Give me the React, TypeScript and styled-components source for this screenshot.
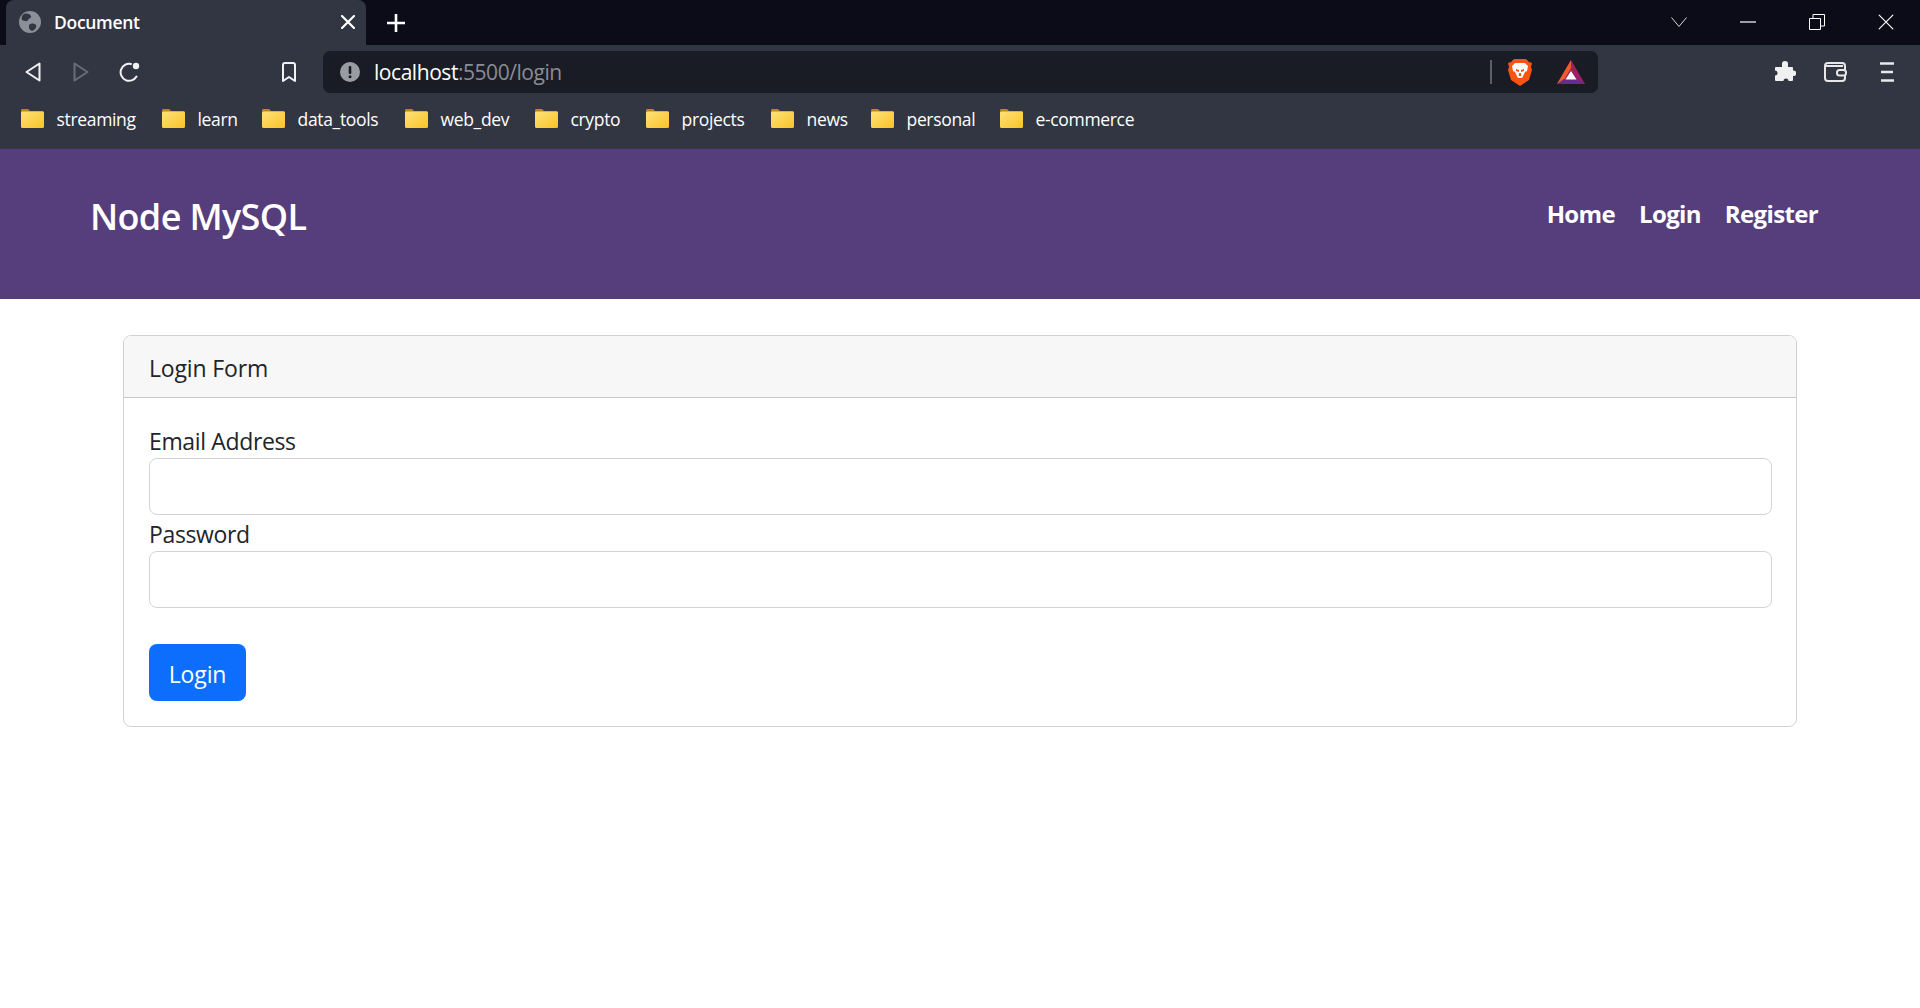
import React from "react";
import styled, { createGlobalStyle } from "styled-components";

const Global = createGlobalStyle`
  html, body { margin: 0; padding: 0; background: #fff; }
  body { font-family: "Open Sans", "Noto Sans", "Liberation Sans", sans-serif; overflow: hidden; }
  * { box-sizing: border-box; }
`;

const Page = styled.div`display: flex; flex-direction: column; width: 1920px; height: 1008px; background: #fff;`;
const TitleBar = styled.div`display: flex; align-items: flex-end; height: 45px; padding-left: 6px; background: #0b0c17;`;
const Tab = styled.div`
  display: flex; align-items: center; width: 360px; height: 45px; padding: 0 11px 2px 13px;
  background: #323643; border-radius: 8px 8px 0 0;
`;
const TabTitle = styled.span`flex: 1; margin-left: 13px; color: #fff; font-size: 17.5px; font-weight: 600; letter-spacing: -0.3px;`;
const NewTab = styled.div`display: flex; margin-left: 21px; margin-bottom: 13px;`;
const WindowControls = styled.div`display: flex; align-items: center; gap: 53px; margin-left: auto; height: 45px; padding: 0 26px 2px 0;`;
const Toolbar = styled.div`display: flex; align-items: center; height: 48px; padding: 6px 0 0; background: #323643;`;
const NavIcons = styled.div`display: flex; align-items: center; width: 323px; padding-left: 25px;`;
const NavIcon = styled.div<{ $left?: number }>`display: flex; margin-left: ${p => p.$left ?? 0}px;`;
const AddressBar = styled.div`
  display: flex; align-items: center; width: 1275px; height: 42px; padding: 0 13px 0 17px;
  background: #191c24; border-radius: 7px;
`;
const Url = styled.div`flex: 1; margin-left: 14px; font-size: 21px; letter-spacing: -0.45px; color: #fff;`;
const UrlRest = styled.span`color: #8a8d96;`;
const Separator = styled.div`width: 2px; height: 24px; background: #5b5e66; margin-right: 16px;`;
const BatWrap = styled.div`display: flex; margin-left: 25px;`;
const Extensions = styled.div`display: flex; align-items: center; margin-left: auto; padding-right: 25px;`;
const ExtensionSlot = styled.div<{ $left?: number }>`display: flex; margin-left: ${p => p.$left ?? 0}px;`;
const Bookmarks = styled.div`display: flex; align-items: center; height: 56px; padding: 0 0 4px 21px; background: #323643; border-bottom: 1px solid #3b3550;`;
const Bookmark = styled.div<{ $w: number }>`display: flex; align-items: center; width: ${p => p.$w}px; color: #fff; font-size: 17.5px; letter-spacing: -0.33px;`;
const BookmarkLabel = styled.span`margin-left: 12.5px;`;
const Navbar = styled.nav`display: flex; align-items: center; justify-content: space-between; height: 150px; padding: 0 102px 14px 90px; background: #563d7c;`;
const Brand = styled.a`color: #fff; font-size: 36px; font-weight: 600; letter-spacing: -0.65px; line-height: 44px;`;
const NavLinks = styled.div`display: flex; gap: 24px; margin-bottom: 8px;`;
const NavLink = styled.a`color: #fff; font-size: 24px; font-weight: 700; letter-spacing: -0.65px;`;
const Main = styled.main`padding: 36px 123px 0;`;
const Card = styled.section`border: 1px solid rgba(0,0,0,.18); border-radius: 8px; overflow: hidden;`;
const CardHeader = styled.header`height: 62px; padding: 14px 25px 10px; background: #f7f7f7; border-bottom: 1px solid rgba(0,0,0,.18); color: #212529; font-size: 23px; line-height: 36px; letter-spacing: -0.16px;`;
const CardBody = styled.div`display: flex; flex-direction: column; padding: 24px 24px 25px 25px;`;
const Label = styled.label`position: relative; top: 1px; color: #212529; font-size: 23px; line-height: 36px; letter-spacing: -0.36px;`;
const Input = styled.input`display: block; width: 100%; height: 57px; padding: 9px 18px; background: #fff; border: 1px solid #ced4da; border-radius: 8px;`;
const Submit = styled.button`
  align-self: flex-start; width: 97px; height: 57px; padding: 2px 0 0; margin-top: 36px; border: 0; border-radius: 8px;
  background: #0d6efd; color: #fff; font: 23px/36px "Open Sans", sans-serif; letter-spacing: -0.1px;
`;

const Folder = () => (
  <svg width="23" height="19" viewBox="0 0 23 19">
    <defs><linearGradient id="fg" x1="0" y1="0" x2="1" y2="1"><stop offset="0" stopColor="#ffe27a" /><stop offset="1" stopColor="#f8c326" /></linearGradient></defs>
    <path d="M0 1.500C0 .6.6 0 1.500 0h5.500l2 2h12.500c.9 0 1.500.6 1.500 1.500V6H0z" fill="#b98a14" />
    <rect x="0" y="2.400" width="23" height="16.600" rx="1.500" fill="url(#fg)" />
  </svg>
);
const Globe = () => (
  <svg width="22" height="22" viewBox="0 0 22 22">
    <circle cx="11" cy="11" r="11" fill="#8c8f97" />
    <path d="M5 3c3-1 6 0 7 2 .8 2-2 2-3 4-1 2-4 1-6 0-1-2 0-5 2-6zM10 14c2-2 5-2 7 0 1 2-1 5-4 6-2-1-3-2-3-3z" fill="#323643" />
  </svg>
);
const Close = ({ s = 14, w = 2.2, c = "#fff" }: { s?: number; w?: number; c?: string }) => (
  <svg width={s} height={s} viewBox="0 0 14 14"><path d="M1 1l12 12M13 1L1 13" stroke={c} strokeWidth={w} strokeLinecap="round" /></svg>
);
const Back = ({ flip, c = "#f2f2f2" }: { flip?: boolean; c?: string }) => (
  <svg width="16" height="20" viewBox="0 0 16 20" style={flip ? { transform: "scaleX(-1)" } : undefined}>
    <path d="M14.500 1.500v17L1.500 10z" fill="none" stroke={c} strokeWidth="2" strokeLinejoin="round" />
  </svg>
);
const Reload = () => (
  <svg width="22" height="22" viewBox="0 0 22 22">
    <path d="M17.500 15.500A8.500 8.500 0 1 1 12 3" fill="none" stroke="#f2f2f2" strokeWidth="2" strokeLinecap="round" />
    <circle cx="17" cy="5" r="3.200" fill="#f2f2f2" />
  </svg>
);
const BookmarkIcon = () => (
  <svg width="16" height="20" viewBox="0 0 16 20"><path d="M2 3a2 2 0 0 1 2-2h8a2 2 0 0 1 2 2v16l-6-4-6 4z" fill="none" stroke="#f2f2f2" strokeWidth="2" strokeLinejoin="round" /></svg>
);
const Info = () => (
  <svg width="20" height="20" viewBox="0 0 20 20"><circle cx="10" cy="10" r="10" fill="#9a9ca3" /><rect x="8.700" y="4" width="2.600" height="8" rx="1" fill="#191c24" /><circle cx="10" cy="14.800" r="1.500" fill="#191c24" /></svg>
);
const Lion = () => (
  <svg width="24" height="27" viewBox="0 0 24 27">
    <path d="M6 0h12l3 3 3 1-1 4 1 3-3 10-6 4-3 2-3-2-6-4L0 11l1-3-1-4 3-1z" fill="#fb5412" />
    <path d="M7 4h10l3 3-1 5-2 1-2 4-1 2h-4l-1-2-2-4-2-1-1-5z" fill="#fff" />
    <path d="M8 10l3 1v2l-3-1zM16 10l-3 1v2l3-1zM11 14h2l.5 3h-3z" fill="#fb5412" />
  </svg>
);
const Bat = () => (
  <svg width="28" height="24" viewBox="0 0 28 24">
    <path d="M14 0l14 24H0z" fill="#9e1f63" />
    <path d="M14 0L0 24l7-4 7-12z" fill="#f15a29" />
    <path d="M0 24h28l-7-5H7z" fill="#662d91" />
    <path d="M14 11l5.500 8.500h-11z" fill="#fff" />
  </svg>
);
const Puzzle = () => (
  <svg width="22" height="22" viewBox="0 0 22 22">
    <path d="M8 2.500a3 2.500 0 0 1 6 0V6h4a1 1 0 0 1 1 1v2.500a2.800 2.800 0 1 1 0 5.500V19a1 1 0 0 1-1 1h-3.500a2.500 2.500 0 0 0-5 0H2a1 1 0 0 1-1-1v-4.500a2.500 2.500 0 0 0 0-5V7a1 1 0 0 1 1-1h6z" fill="#f0f0f0" />
  </svg>
);
const Wallet = () => (
  <svg width="23" height="20" viewBox="0 0 23 20">
    <path d="M1 4a3 3 0 0 1 3-3h14a3 3 0 0 1 3 3v12a3 3 0 0 1-3 3H4a3 3 0 0 1-3-3zM1 4h18" fill="none" stroke="#e8e8e8" strokeWidth="2" />
    <rect x="13" y="8" width="9" height="5.500" rx="2.500" fill="#323643" stroke="#e8e8e8" strokeWidth="2" />
  </svg>
);
const Menu = () => (
  <svg width="15" height="20" viewBox="0 0 15 20"><path d="M0 1.500h14M1 10h12M1 18.500h13" stroke="#e8e8e8" strokeWidth="2.600" /></svg>
);

const bookmarks: [string, number][] = [
  ["streaming", 141], ["learn", 100], ["data_tools", 143], ["web_dev", 130], ["crypto", 111],
  ["projects", 125], ["news", 100], ["personal", 129], ["e-commerce", 140],
];

export default function App() {
  return (
    <Page>
      <Global />
      <TitleBar>
        <Tab>
          <Globe />
          <TabTitle>Document</TabTitle>
          <Close />
        </Tab>
        <NewTab>
          <svg width="18" height="18" viewBox="0 0 18 18"><path d="M9 0v18M0 9h18" stroke="#fff" strokeWidth="2.600" /></svg>
        </NewTab>
        <WindowControls>
          <svg width="16" height="10" viewBox="0 0 16 10"><path d="M.5.5L8 9.500 15.500.5" fill="none" stroke="#d8d8d8" strokeWidth="1" /></svg>
          <svg width="16" height="2" viewBox="0 0 16 2"><path d="M0 1h16" stroke="#fff" strokeWidth="1.200" /></svg>
          <svg width="16" height="16" viewBox="0 0 16 16"><path d="M.5 4.500h11v11H.5zM4 4.500V.5h11.500V12h-4" fill="none" stroke="#fff" strokeWidth="1" /></svg>
          <Close s={16} w={1} />
        </WindowControls>
      </TitleBar>
      <Toolbar>
        <NavIcons>
          <NavIcon><Back /></NavIcon>
          <NavIcon $left={32}><Back flip c="#6a6d78" /></NavIcon>
          <NavIcon $left={30}><Reload /></NavIcon>
          <NavIcon $left={140}><BookmarkIcon /></NavIcon>
        </NavIcons>
        <AddressBar>
          <Info />
          <Url>localhost<UrlRest>:5500/login</UrlRest></Url>
          <Separator />
          <Lion />
          <BatWrap><Bat /></BatWrap>
        </AddressBar>
        <Extensions>
          <ExtensionSlot><Puzzle /></ExtensionSlot>
          <ExtensionSlot $left={28}><Wallet /></ExtensionSlot>
          <ExtensionSlot $left={33}><Menu /></ExtensionSlot>
        </Extensions>
      </Toolbar>
      <Bookmarks>
        {bookmarks.map(([name, w]) => (
          <Bookmark key={name} $w={w}>
            <Folder />
            <BookmarkLabel>{name}</BookmarkLabel>
          </Bookmark>
        ))}
      </Bookmarks>
      <Navbar>
        <Brand>Node MySQL</Brand>
        <NavLinks>
          <NavLink>Home</NavLink>
          <NavLink>Login</NavLink>
          <NavLink>Register</NavLink>
        </NavLinks>
      </Navbar>
      <Main>
        <Card>
          <CardHeader>Login Form</CardHeader>
          <CardBody>
            <Label>Email Address</Label>
            <Input type="email" />
            <Label>Password</Label>
            <Input type="password" />
            <Submit>Login</Submit>
          </CardBody>
        </Card>
      </Main>
    </Page>
  );
}
